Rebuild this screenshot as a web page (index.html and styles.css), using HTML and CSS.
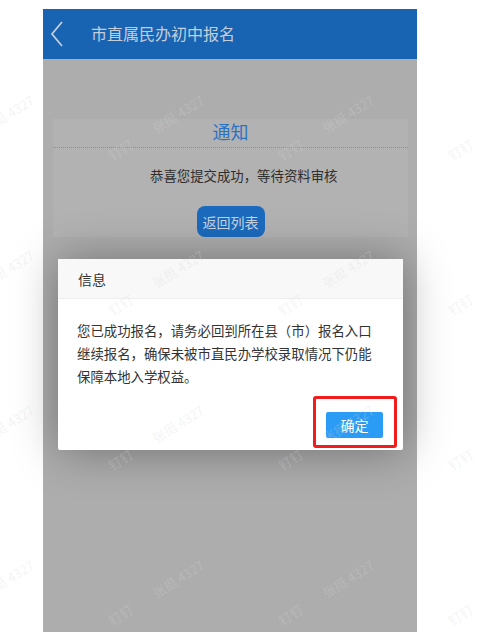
FILE: index.html
```html
<!DOCTYPE html>
<html lang="zh-CN">
<head>
    <meta charset="UTF-8">
    <meta name="viewport" content="width=device-width, initial-scale=1.0">
    <title>市直属民办初中报名</title>
    <link rel="stylesheet" href="styles.css">
</head>
<body>
    <div class="phone">
        <div class="header">
            <svg class="back" width="14" height="26" viewBox="0 0 14 26">
                <polyline points="12,1 2,13 12,25" fill="none" stroke="#c3cedc" stroke-width="1.8"/>
            </svg>
            <span class="header-title">市直属民办初中报名</span>
        </div>

        <div class="notice">
            <div class="notice-title">通知</div>
            <div class="notice-text">恭喜您提交成功，等待资料审核</div>
            <div class="notice-actions">
                <button class="back-btn">返回列表</button>
            </div>
        </div>

        <!-- 弹窗 -->
        <div class="layer">
            <div class="layer-title">信息</div>
            <div class="layer-content">您已成功报名，请务必回到所在县（市）报名入口继续报名，确保未被市直民办学校录取情况下仍能保障本地入学权益。</div>
            <div class="layer-btns">
                <button class="ok-btn">确定</button>
            </div>
            <div class="mark"></div>
        </div>
    </div>

    <!-- 水印 -->
    <div class="wm-frame">
        <div class="watermark">
            <span>钉钉　　张挺 4327</span><span>钉钉　　张挺 4327</span><span>钉钉　　张挺 4327</span><span>钉钉　　张挺 4327</span>
            <span>钉钉　　张挺 4327</span><span>钉钉　　张挺 4327</span><span>钉钉　　张挺 4327</span><span>钉钉　　张挺 4327</span>
            <span>钉钉　　张挺 4327</span><span>钉钉　　张挺 4327</span><span>钉钉　　张挺 4327</span><span>钉钉　　张挺 4327</span>
            <span>钉钉　　张挺 4327</span><span>钉钉　　张挺 4327</span><span>钉钉　　张挺 4327</span><span>钉钉　　张挺 4327</span>
        </div>
    </div>
</body>
</html>
```

FILE: styles.css
```css
* {
    box-sizing: border-box;
    font-family: "Noto Sans CJK SC", "Noto Sans", sans-serif;
}

body {
    margin: 0;
    background-color: #ffffff;
    height: 632px;
    overflow: hidden;
    position: relative;
}

.phone {
    width: 374px;
    height: 623px;
    margin: 9px 0 0 43px;
    background-color: #adadad;
    position: relative;
}

.header {
    height: 50px;
    background-color: #1864b3;
    display: flex;
    align-items: center;
    padding-left: 7px;
}

.back {
    display: block;
}

.header-title {
    margin-left: 27px;
    font-size: 16px;
    color: #c3cedc;
    line-height: 22px;
    margin-top: -2px;
}

.notice {
    margin: 60px 9px 0 10px;
    background-color: #b2b2b2;
    height: 118px;
}

.notice-title {
    height: 29px;
    line-height: 24px;
    text-align: center;
    font-size: 18px;
    color: #2a73c4;
    border-bottom: 1px dotted #8f8f8f;
}

.notice-text {
    margin-top: 17px;
    padding-left: 97px;
    font-size: 13.4px;
    line-height: 20px;
    color: #2e2e2e;
}

.notice-actions {
    text-align: center;
    margin-top: 21px;
}

.back-btn {
    height: 31px;
    width: 68px;
    padding: 0;
    border: none;
    border-radius: 8px;
    background-color: #1b6abd;
    color: #c6d3e4;
    font-size: 14px;
}

.layer {
    position: absolute;
    left: 15px;
    top: 250px;
    width: 345px;
    background-color: #ffffff;
    border-radius: 2px;
    box-shadow: 1px 1px 45px rgba(0, 0, 0, 0.35);
}

.layer-title {
    height: 40px;
    line-height: 40px;
    padding-left: 20px;
    font-size: 14px;
    color: #333;
    background-color: #f8f8f8;
    border-bottom: 1px solid #eeeeee;
}

.layer-content {
    padding: 20px 19px 20px 19px;
    font-size: 13.4px;
    line-height: 23px;
    color: #333;
}

.layer-btns {
    text-align: right;
    padding: 0 15px 12px;
}

.ok-btn {
    height: 26px;
    width: 57px;
    margin: 4px 5px 0;
    padding: 0;
    border: none;
    border-radius: 2px;
    background-color: #2b9cf5;
    color: #ffffff;
    font-size: 14px;
}

.mark {
    position: absolute;
    left: 255px;
    top: 137px;
    width: 84px;
    height: 52px;
    border: 3px solid #f11d1d;
    border-radius: 3px;
}

.wm-frame {
    position: absolute;
    left: 0;
    top: 0;
    width: 478px;
    height: 632px;
    overflow: hidden;
    pointer-events: none;
}

.watermark {
    display: grid;
    grid-template-columns: repeat(4, 170px);
    grid-auto-rows: 155px;
    margin: 50px 0 0 -99px;
}

.watermark span {
    display: flex;
    align-items: center;
    justify-content: center;
    font-size: 13px;
    color: rgba(215, 215, 215, 0.28);
    transform: rotate(-32deg);
    white-space: nowrap;
}
```
